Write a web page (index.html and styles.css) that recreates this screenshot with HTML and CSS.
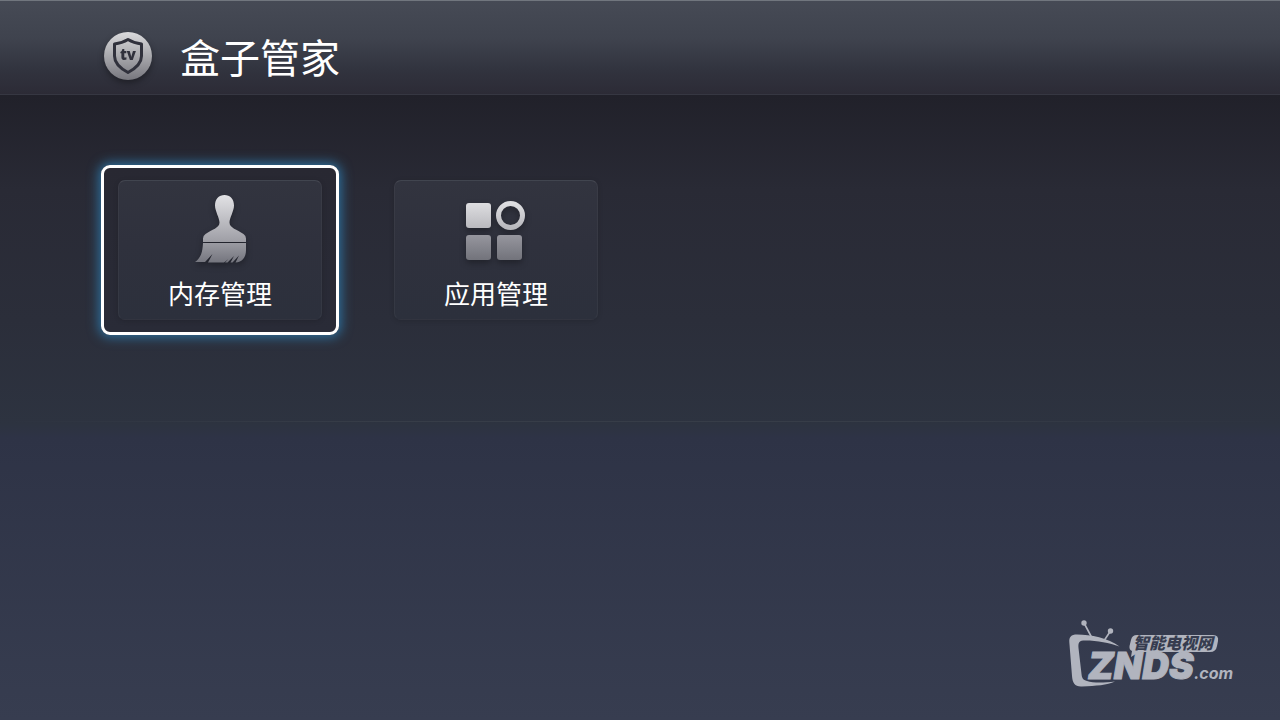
FILE: index.html
```
<!DOCTYPE html>
<html lang="zh-CN">
<head>
<meta charset="utf-8">
<title>盒子管家</title>
<link rel="stylesheet" href="styles.css">
</head>
<body>
<header class="topbar">
  <svg class="badge" viewBox="0 0 60 60" aria-hidden="true">
    <defs>
      <linearGradient id="disc" x1="0" y1="0" x2="0" y2="1">
        <stop offset="0" stop-color="#dadadc"/><stop offset="1" stop-color="#77777e"/>
      </linearGradient>
    </defs>
    <circle cx="30" cy="30" r="24" fill="url(#disc)"/>
    <path d="M30 13.500C26 16 21 17.500 16.500 18V30C16.500 38 22.500 42.500 30 46.500C37.500 42.500 43.500 38 43.500 30V18C39 17.500 34 16 30 13.500Z" fill="none" stroke="#30313c" stroke-width="3" stroke-linejoin="round"/>
    <text x="30" y="34" text-anchor="middle" class="badge-text">tv</text>
  </svg>
  <h1 class="title">盒子管家</h1>
</header>
<main class="content">
  <nav class="cards">
    <button class="card card-active" type="button">
      <span class="panel">
        <svg class="icon" viewBox="0 0 80 80" aria-hidden="true">
          <defs>
            <linearGradient id="brush" gradientUnits="userSpaceOnUse" x1="0" y1="5" x2="0" y2="74">
              <stop offset="0" stop-color="#e2e2e5"/><stop offset="0.65" stop-color="#a1a1a8"/><stop offset="1" stop-color="#71727b"/>
            </linearGradient>
          </defs>
          <path fill="url(#brush)" d="M44.500 5C39 5 35 9 35 15.500C35 21 39.500 28 39.500 32.500C39.500 38 32 39.500 25.500 44Q23 45.500 23 48.500V52H66V48.500Q66 45.500 63.500 44C57 39.500 49.500 38 49.500 32.500C49.500 28 54 21 54 15.500C54 9 50 5 44.500 5Z"/>
          <path fill="url(#brush)" d="M23 53H66V60C66 68 62 72 55.500 72.500L59 65.500L52.500 72.500H50.500L54 66L47.500 72.500H45L48.500 69L44 72.500H28L32.500 64L25 72H15C21 68 22.500 62 23 53Z"/>
        </svg>
        <span class="label">内存管理</span>
      </span>
    </button>
    <button class="card" type="button">
      <span class="panel">
        <svg class="icon" viewBox="0 0 80 80" aria-hidden="true">
          <defs>
            <linearGradient id="light" x1="0" y1="0" x2="0" y2="1">
              <stop offset="0" stop-color="#dedee1"/><stop offset="1" stop-color="#b9b9be"/>
            </linearGradient>
            <linearGradient id="dark" x1="0" y1="0" x2="0" y2="1">
              <stop offset="0" stop-color="#96969e"/><stop offset="1" stop-color="#72737b"/>
            </linearGradient>
          </defs>
          <rect x="10" y="13" width="25" height="25" rx="3" fill="url(#light)"/>
          <circle cx="54.500" cy="25.500" r="12" fill="none" stroke="url(#light)" stroke-width="5"/>
          <rect x="10" y="45" width="25" height="25" rx="3" fill="url(#dark)"/>
          <rect x="41" y="45" width="25" height="25" rx="3" fill="url(#dark)"/>
        </svg>
        <span class="label">应用管理</span>
      </span>
    </button>
  </nav>
</main>
<svg class="watermark" viewBox="0 0 180 84" role="img" aria-label="智能电视网 ZNDS.com">
  <g fill="#b1b4be">
    <circle cx="24" cy="11" r="2.700"/><circle cx="50.500" cy="19" r="2.700"/>
    <path d="M24 11L32 26M50.500 19L44.500 28" stroke="#b1b4be" stroke-width="1.600"/>
    <path d="M59.500 34.500C48 26 31 22.500 17 22.500C11 22.500 9 25 9.300 30L12 64C12.500 71 15 75 22 74.500C36 74 47 73 55 69.500C43 71 33 71 27 69C23 68 22 66 21.500 62L18.500 36C18 30 19.500 28.500 25 28.500C38 28.500 49 31 59.500 34.500Z"/>
    <path d="M77 23H153Q159 23 158 29L157 34Q156 40 150 40H79L71 45L72 39Q69 38 69.500 34L71 28Q72 23 77 23Z"/>
    <text class="mark-name" x="28" y="67">ZNDS</text>
    <text class="mark-com" x="134" y="67">.com</text>
  </g>
  <text class="mark-cn" x="73" y="37">智能电视网</text>
</svg>
</body>
</html>
```
FILE: styles.css
```
* {
  box-sizing: border-box;
}

body {
  margin: 0;
  min-height: 100vh;
  font-family: "Noto Sans", "Noto Sans CJK SC", sans-serif;
  color: #fff;
  background: linear-gradient(#21212a 96px, #292a35 190px, #2b2e3a 320px, #2d3340 424px, #2e3346 438px, #373d50 100%);
}

.topbar {
  display: flex;
  align-items: center;
  gap: 22px;
  height: 95px;
  padding: 16px 98px 0;
  background: linear-gradient(#464a55, #3f434e 40%, #31333e 75%, #2c2b36);
  border-top: 1px solid #71767e;
  border-bottom: 1px solid #363742;
}

.badge {
  width: 60px;
  height: 60px;
  filter: drop-shadow(0 3px 3px rgba(0, 0, 0, 0.35));
}

.badge-text {
  font: 800 15px "Open Sans", sans-serif;
  fill: #30313c;
}

.title {
  margin: 0;
  font-size: 40px;
  line-height: 58px;
  font-weight: 400;
  font-family: "Noto Sans CJK SC", sans-serif;
}

.content {
  padding: 70px 101px 86px;
  border-bottom: 1px solid;
  border-image: linear-gradient(90deg, transparent, #373d48 30%, #373d48 70%, transparent) 1;
}

.cards {
  display: flex;
  flex-wrap: wrap;
  gap: 38px;
}

.card {
  padding: 12px 14px;
  border: 3px solid transparent;
  border-radius: 9px;
  background: none;
  color: inherit;
  font: inherit;
}

.card-active {
  border-color: #fff;
  background: linear-gradient(#282832, #292b37);
  box-shadow: 0 0 12px 2px #2d73a2;
}

.panel {
  display: flex;
  flex-direction: column;
  align-items: center;
  width: 204px;
  height: 140px;
  padding-top: 9px;
  border: 1px solid rgba(255, 255, 255, 0.04);
  border-top-color: rgba(255, 255, 255, 0.1);
  border-bottom-color: transparent;
  border-radius: 7px;
  background: linear-gradient(#32343f, #2f313d 45%, #2c303c);
  box-shadow: 0 1px 5px rgba(0, 0, 0, 0.15);
}

.icon {
  flex: none;
  width: 80px;
  height: 80px;
  filter: drop-shadow(0 3px 3px rgba(0, 0, 0, 0.3));
}

.label {
  font-family: "Noto Sans CJK SC", sans-serif;
  font-size: 26px;
  line-height: 46px;
}

.watermark {
  position: absolute;
  right: 40px;
  bottom: 24px;
  width: 180px;
  height: 84px;
}

.mark-name {
  font: italic 900 37px Inter, sans-serif;
  stroke: #b1b4be;
  stroke-width: 1px;
}

.mark-com {
  font: italic 700 16px Inter, sans-serif;
}

.mark-cn {
  font: italic 900 16px "Noto Sans CJK SC", sans-serif;
  fill: #363c4f;
}
```
